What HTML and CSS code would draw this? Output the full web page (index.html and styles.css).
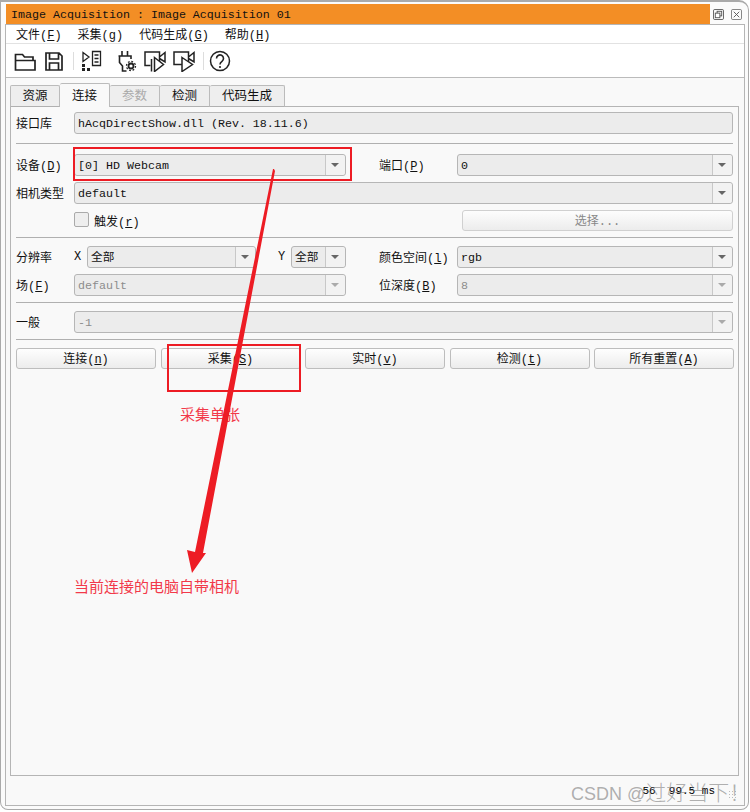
FILE: index.html
```html
<!DOCTYPE html>
<html lang="zh">
<head>
<meta charset="utf-8">
<title>Image Acquisition</title>
<link rel="stylesheet" href="styles.css">
</head>
<body>
<div class="window">
  <div class="titlebar">
    <div class="title">Image Acquisition : Image Acquisition 01</div>
    <div class="winbtns">
      <svg class="winbtn" viewBox="0 0 12 12"><rect x="0.5" y="0.5" width="11" height="11" rx="1.5" fill="none" stroke="#555"/><rect x="4.5" y="2.5" width="5" height="5" fill="none" stroke="#555"/><rect x="2.5" y="4.5" width="5" height="5" fill="#fff" stroke="#555"/></svg>
      <svg class="winbtn" viewBox="0 0 12 12"><rect x="0.5" y="0.5" width="11" height="11" rx="1.5" fill="none" stroke="#777"/><path d="M3 3l6 6M9 3l-6 6" stroke="#555" fill="none"/></svg>
    </div>
  </div>
  <div class="inner">
    <div class="menubar">
      <span class="menu">文件(<u>F</u>)</span>
      <span class="menu">采集(<u>g</u>)</span>
      <span class="menu">代码生成(<u>G</u>)</span>
      <span class="menu">帮助(<u>H</u>)</span>
    </div>
    <div class="toolbar">
      <svg class="tool" viewBox="0 0 22 22"><path d="M1.500 20V4.500h7l2 2.500h8.500v3.500M1.500 10.500h19.500V20H1.500z" fill="none" stroke="#222" stroke-width="1.700"/></svg>
      <svg class="tool" viewBox="0 0 22 22"><path d="M3 3h13l3 3v14H3zM6.500 3v6h9V3M6.500 20v-7h9v7" fill="none" stroke="#222" stroke-width="1.700"/></svg>
      <span class="tsep"></span>
      <svg class="tool tool-list" viewBox="0 0 22 22"><path d="M3 2.500l6 4.500-6 4.500z M12.500 1.500h8v14h-8z M14.500 5h4M14.500 8.500h4M14.500 12h4" fill="none" stroke="#222" stroke-width="1.300"/><path d="M2 14h3v3H2zM7 18h3v3H7zM2 18h3v3H2z" fill="#222"/></svg>
      <svg class="tool tool-plug" viewBox="0 0 22 22"><path d="M7 1v5M12.500 1v5M3.500 6h12.500v3M4.500 6.500v6l3 3.500v5h4" fill="none" stroke="#222" stroke-width="1.600"/><circle cx="16" cy="16" r="2.500" fill="none" stroke="#222" stroke-width="1.800"/><circle cx="16" cy="16" r="4.500" fill="none" stroke="#222" stroke-width="1.300" stroke-dasharray="1.800 1.700"/></svg>
      <svg class="tool" viewBox="0 0 22 22"><path d="M6.500 15.500H1V2h14.500v13.500M15.500 7l5.500-4.500V12l-5.500-3.500" fill="none" stroke="#222" stroke-width="1.500"/><path d="M7.500 9v12.500M10.500 7.500l9 7-9 7z" fill="#fff" stroke="#222" stroke-width="1.500"/></svg>
      <svg class="tool" viewBox="0 0 22 22"><path d="M9 14.500H1V2h14.500v10M15.500 7l5.500-4.500V12l-5.500-3.500" fill="none" stroke="#222" stroke-width="1.500"/><path d="M9 7.500l10.500 7L9 21.500z" fill="#fff" stroke="#222" stroke-width="1.500"/></svg>
      <span class="tsep"></span>
      <svg class="tool tool-help" viewBox="0 0 22 22"><circle cx="11" cy="11" r="9.500" fill="none" stroke="#222" stroke-width="1.500"/><path d="M7.500 8.500a3.500 3.500 0 1 1 5.500 2.800c-1.300.9-2 1.500-2 3.200" fill="none" stroke="#222" stroke-width="1.600"/><circle cx="11" cy="17" r="1.100" fill="#222"/></svg>
    </div>
    <div class="content">
      <div class="tabs">
        <span class="tab">资源</span>
        <span class="tab active">连接</span>
        <span class="tab off">参数</span>
        <span class="tab">检测</span>
        <span class="tab wide">代码生成</span>
      </div>
      <div class="pane">
        <div class="row r-lib">
          <label class="lbl">接口库</label>
          <div class="field grow"><span class="val">hAcqDirectShow.dll (Rev. 18.11.6)</span></div>
        </div>
        <hr class="rule">
        <div class="row r-dev">
          <div class="half-left">
            <label class="lbl">设备(<u>D</u>)</label>
            <div class="field grow combo"><span class="val">[0] HD Webcam</span><span class="arrow"></span></div>
          </div>
          <div class="half-right">
            <label class="lbl2">端口(<u>P</u>)</label>
            <div class="field grow combo"><span class="val">0</span><span class="arrow"></span></div>
          </div>
        </div>
        <div class="row r-type">
          <label class="lbl">相机类型</label>
          <div class="field grow combo"><span class="val">default</span><span class="arrow"></span></div>
        </div>
        <div class="row r-trig">
          <span class="check"></span>
          <span class="checktext">触发(<u>r</u>)</span>
          <span class="selbtn">选择...</span>
        </div>
        <hr class="rule rule-b">
        <div class="row r-res">
          <div class="half-left">
            <label class="lbl res">分辨率</label>
            <span class="axis">X</span>
            <div class="field grow combo"><span class="val">全部</span><span class="arrow"></span></div>
            <span class="axis axis-y">Y</span>
            <div class="field combo small"><span class="val">全部</span><span class="arrow"></span></div>
          </div>
          <div class="half-right">
            <label class="lbl2">颜色空间(<u>l</u>)</label>
            <div class="field grow combo"><span class="val">rgb</span><span class="arrow"></span></div>
          </div>
        </div>
        <div class="row r-field">
          <div class="half-left">
            <label class="lbl">场(<u>F</u>)</label>
            <div class="field grow combo dis"><span class="val">default</span><span class="arrow"></span></div>
          </div>
          <div class="half-right">
            <label class="lbl2">位深度(<u>B</u>)</label>
            <div class="field grow combo dis"><span class="val">8</span><span class="arrow"></span></div>
          </div>
        </div>
        <hr class="rule rule-b">
        <div class="row r-gen">
          <label class="lbl">一般</label>
          <div class="field grow combo dis"><span class="val">-1</span><span class="arrow"></span></div>
        </div>
        <hr class="rule rule-b">
        <div class="btnrow">
          <span class="btn">连接(<u>n</u>)</span>
          <span class="btn">采集(<u>S</u>)</span>
          <span class="btn">实时(<u>v</u>)</span>
          <span class="btn">检测(<u>t</u>)</span>
          <span class="btn">所有重置(<u>A</u>)</span>
        </div>
      </div>
      <div class="status"><span class="statustext">56  99.5 ms</span><span class="grip"></span></div>
    </div>
  </div>
  <div class="anno box-a"></div>
  <div class="anno box-b"></div>
  <div class="note note-a">采集单张</div>
  <div class="note note-b">当前连接的电脑自带相机</div>
  <svg class="arrowline" viewBox="0 0 750 812"><path d="M274 169L275 171L203 553L206 553L192 573L187 550L195 552L273 169z" fill="#ed1c24"/></svg>
  <div class="mark">CSDN @<span class="mark-cjk">过好当下！</span></div>
</div>
</body>
</html>
```
FILE: styles.css
```css
* { box-sizing: border-box; }
html, body { margin: 0; padding: 0; }
body {
  width: 750px;
  height: 812px;
  overflow: hidden;
  background: #fff;
  font-family: "Liberation Mono", "Noto Sans CJK SC", monospace;
  font-size: 12px;
  color: #111;
}
u { text-underline-offset: 1px; }
.window {
  position: relative;
  width: 749px;
  height: 810px;
  background: #fbfbfb;
  border: 1px solid #aaa;
  border-top-width: 2px;
  border-radius: 0 10px 8px 8px;
  padding: 2px 3px 3px 4px;
  display: flex;
  flex-direction: column;
}
.titlebar { height: 20px; display: flex; flex: none; }
.title {
  width: 704px;
  margin-left: 1px;
  background: #f38e25;
  padding: 4px 0 0 5px;
  font-size: 11.67px;
  line-height: 15px;
  white-space: pre;
}
.winbtns { display: flex; gap: 7px; padding: 5px 0 0 3px; }
.winbtn { width: 11px; height: 11px; }
.inner {
  flex: 1;
  border: 1px solid #b5b5b5;
  background: #fff;
  display: flex;
  flex-direction: column;
  min-height: 0;
}
.menubar {
  height: 19px;
  flex: none;
  display: flex;
  gap: 16px;
  padding-left: 10px;
  align-items: center;
  border-bottom: 1px solid #e2e2e2;
  font-size: 12px;
}
.toolbar {
  height: 34px;
  flex: none;
  display: flex;
  align-items: center;
  padding-left: 8px;
  gap: 7px;
  border-bottom: 1px solid #bbb;
}
.tool { width: 22px; height: 22px; flex: none; }
.tool-list { margin-left: -1px; }
.tool-plug { margin-left: 6px; }
.tool-help { margin-left: -2px; }
.tsep { width: 1px; height: 18px; background: #ddd; margin-left: 1px; }
.content {
  flex: 1;
  background: #f9f9f9;
  padding: 5px 5px 0 4px;
  display: flex;
  flex-direction: column;
  min-height: 0;
}
.tabs { display: flex; height: 24px; flex: none; position: relative; z-index: 1; }
.tab {
  width: 50px;
  height: 22px;
  margin-top: 2px;
  text-align: center;
  background: #eee;
  border: 1px solid #bbb;
  border-bottom: 1px solid #b0b0b0;
  border-left-width: 0;
  border-radius: 2px 2px 0 0;
  line-height: 23px;
  font-size: 12.5px;
}
.tab:first-child { border-left-width: 1px; }
.tab.wide { width: 75px; }
.tab.active { background: #f9f9f9; height: 24px; margin-top: 0; border-bottom: 0; line-height: 26px; }
.tab.off { color: #aaa; }
.pane {
  flex: 1;
  border: 1px solid #b5b5b5;
  margin-top: -1px;
  padding: 5px 5px 0 5px;
  min-height: 0;
}
.row { display: flex; align-items: center; }
.r-lib { height: 22px; }
.lbl { width: 58px; flex: none; font-size: 12px; white-space: nowrap; }
.lbl.res { width: 70px; }
.lbl2 { width: 78px; flex: none; font-size: 12px; white-space: nowrap; }
.grow { flex: 1; min-width: 0; }
.field {
  height: 22px;
  background: #ececec;
  border: 1px solid #b6b6b6;
  border-radius: 3px;
  display: flex;
  align-items: center;
  padding-left: 3px;
  white-space: pre;
}
.val { flex: 1; font-size: 11.67px; line-height: 14px; padding-top: 2px; }
.combo .arrow {
  flex: none;
  width: 20px;
  height: 100%;
  border-left: 1px solid #c8c8c8;
  background: #f2f2f2;
  border-radius: 0 3px 3px 0;
  position: relative;
}
.combo .arrow::after {
  content: "";
  position: absolute;
  left: 5px;
  top: 8px;
  border-left: 4px solid transparent;
  border-right: 4px solid transparent;
  border-top: 4px solid #666;
}
.dis .val { color: #8c8c8c; }
.dis .arrow::after { border-top-color: #aaa; }
.rule { border: 0; border-top: 1px solid #b0b0b0; margin: 9px 0 0 0; height: 0; }
.rule-b { margin-top: 6px; }
.r-dev { height: 22px; margin-top: 10px; }
.half-left { width: 330px; flex: none; display: flex; align-items: center; }
.half-right { flex: 1; display: flex; align-items: center; padding-left: 33px; }
.r-type { height: 22px; margin-top: 6px; }
.r-trig { height: 21px; margin-top: 6px; padding-left: 58px; }
.check { width: 15px; height: 15px; margin-bottom: 2px; background: #eee; border: 1px solid #aaa; border-radius: 2px; flex: none; }
.checktext { margin-left: 5px; flex: 1; }
.selbtn {
  width: 271px;
  height: 21px;
  border: 1px solid #d0d0d0;
  border-radius: 3px;
  background: linear-gradient(#fdfdfd, #ececec);
  color: #888;
  text-align: center;
  line-height: 22px;
}
.r-res { height: 22px; margin-top: 8px; }
.axis { width: 13px; flex: none; font-size: 12px; margin-left: -12px; }
.axis-y { margin-left: 22px; width: 13px; }
.small { width: 55px; flex: none; }
.r-field { height: 22px; margin-top: 6px; }
.r-gen { height: 22px; margin-top: 8px; }
.btnrow { display: flex; gap: 4.500px; margin-top: 8px; margin-right: -1px; }
.btn {
  flex: 1;
  height: 21px;
  border: 1px solid #bdbdbd;
  border-radius: 3px;
  background: linear-gradient(#fefefe, #ececec);
  text-align: center;
  line-height: 22px;
  white-space: nowrap;
}
.status {
  height: 29px;
  flex: none;
  position: relative;
  display: flex;
  justify-content: flex-end;
  align-items: center;
}
.statustext { margin-right: 24px; font-size: 11px; color: #000; white-space: pre; }
.grip { position: absolute; right: 1px; bottom: 5px; width: 10px; height: 10px; background-image: radial-gradient(#bbb 1px, transparent 1px); background-size: 3px 3px; }
.anno { position: absolute; border: 2px solid #ed1c24; pointer-events: none; }
.box-a { left: 72px; top: 145px; width: 279px; height: 34px; }
.box-b { left: 166px; top: 342px; width: 134px; height: 48px; }
.note { position: absolute; font-family: "Noto Sans CJK SC", sans-serif; font-size: 15px; line-height: 20px; color: #f2394a; white-space: nowrap; }
.note-a { left: 179px; top: 402px; }
.note-b { left: 73px; top: 574px; }
.arrowline { position: absolute; left: -1px; top: -2px; width: 750px; height: 812px; pointer-events: none; }
.mark { position: absolute; left: 570px; top: 780px; font-family: "Liberation Sans", "Noto Sans CJK SC", sans-serif; font-size: 18px; line-height: 22px; color: rgba(110,110,110,0.55); white-space: nowrap; }
.mark-cjk { font-size: 21px; font-weight: 300; }
```
